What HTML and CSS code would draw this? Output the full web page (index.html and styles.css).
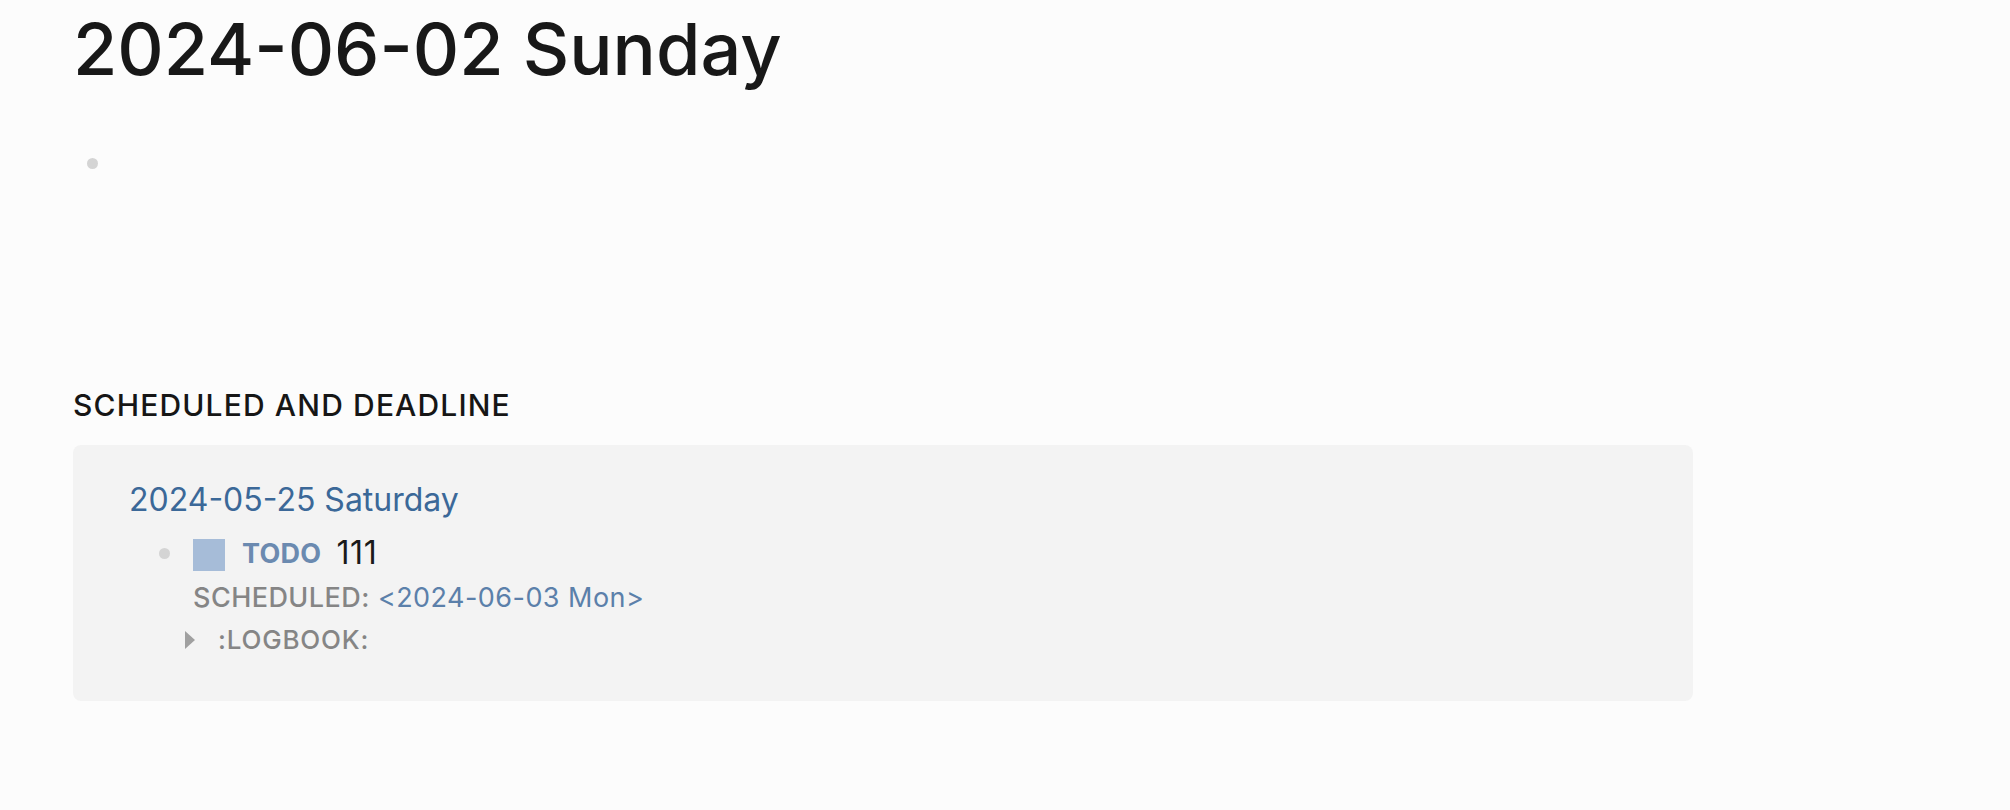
FILE: index.html
```
<!DOCTYPE html>
<html lang="en">
<head>
  <meta charset="UTF-8">
  <title>2024-06-02 Sunday</title>
  <link rel="stylesheet" href="styles.css">
</head>
<body>
  <div class="page">
    <h1 class="page-title">2024-06-02 Sunday</h1>
    <div class="blocks">
      <div class="block">
        <span class="bullet"></span>
        <div class="block-content"></div>
      </div>
    </div>

    <h2 class="section-title">SCHEDULED AND DEADLINE</h2>
    <div class="refs">
      <a class="ref-page">2024-05-25 Saturday</a>
      <div class="ref-block">
        <div class="block todo-row">
          <span class="bullet"></span>
          <span class="checkbox"></span>
          <span class="marker">TODO</span>
          <span class="text">111</span>
        </div>
        <div class="meta">
          <span class="meta-key">SCHEDULED:</span>
          <a class="timestamp">&lt;2024-06-03 Mon&gt;</a>
        </div>
        <div class="logbook">
          <span class="caret"></span>
          <span class="meta-key">:LOGBOOK:</span>
        </div>
      </div>
    </div>
  </div>
</body>
</html>
```

FILE: styles.css
```
* {
  box-sizing: border-box;
}
html, body {
  margin: 0;
  padding: 0;
  background: #fcfcfc;
  color: #1a1a1a;
  font-family: Inter, "Noto Sans", sans-serif;
}
.page {
  padding: 6px 0 0 73px;
}
.page-title {
  margin: 0;
  font-size: 72px;
  line-height: 86px;
  font-weight: 500;
  color: #181818;
}
.blocks {
  margin-top: 49px;
}
.block {
  display: flex;
  align-items: center;
  height: 44px;
}
.bullet {
  width: 11px;
  height: 11px;
  border-radius: 50%;
  background: #d4d4d4;
  margin-left: 14px;
}
.section-title {
  margin: 202px 0 0;
  font-size: 30px;
  line-height: 36px;
  font-weight: 500;
  letter-spacing: 1.15px;
  color: #161616;
}
.refs {
  margin-top: 22px;
  width: 1620px;
  background: #f3f3f3;
  border-radius: 8px;
  padding: 35px 0 41px 56px;
}
.ref-page {
  display: block;
  font-size: 32px;
  line-height: 40px;
  color: #3b6898;
}
.ref-block {
  margin-top: 13px;
}
.todo-row {
  height: 40px;
}
.todo-row .bullet {
  margin-left: 30px;
}
.checkbox {
  width: 32px;
  height: 32px;
  background: #a6bcd8;
  margin-left: 23px;
  margin-top: 4px;
}
.marker {
  margin-left: 17px;
  font-size: 27px;
  font-weight: 700;
  letter-spacing: 0.3px;
  color: #6b8ab0;
}
.text {
  margin-left: 15px;
  font-size: 32px;
  line-height: 40px;
  letter-spacing: 0.6px;
}
.meta {
  margin: 5px 0 0 64px;
  font-size: 27px;
  line-height: 40px;
  letter-spacing: 0.45px;
}
.meta-key {
  color: #858585;
  font-weight: 500;
}
.timestamp {
  color: #5b80aa;
}
.logbook {
  display: flex;
  align-items: center;
  margin: 2px 0 0 56px;
  font-size: 26px;
  line-height: 40px;
  letter-spacing: 0.8px;
}
.caret {
  width: 0;
  height: 0;
  border-top: 9px solid transparent;
  border-bottom: 9px solid transparent;
  border-left: 10px solid #a0a0a0;
  margin-right: 23px;
}
```
